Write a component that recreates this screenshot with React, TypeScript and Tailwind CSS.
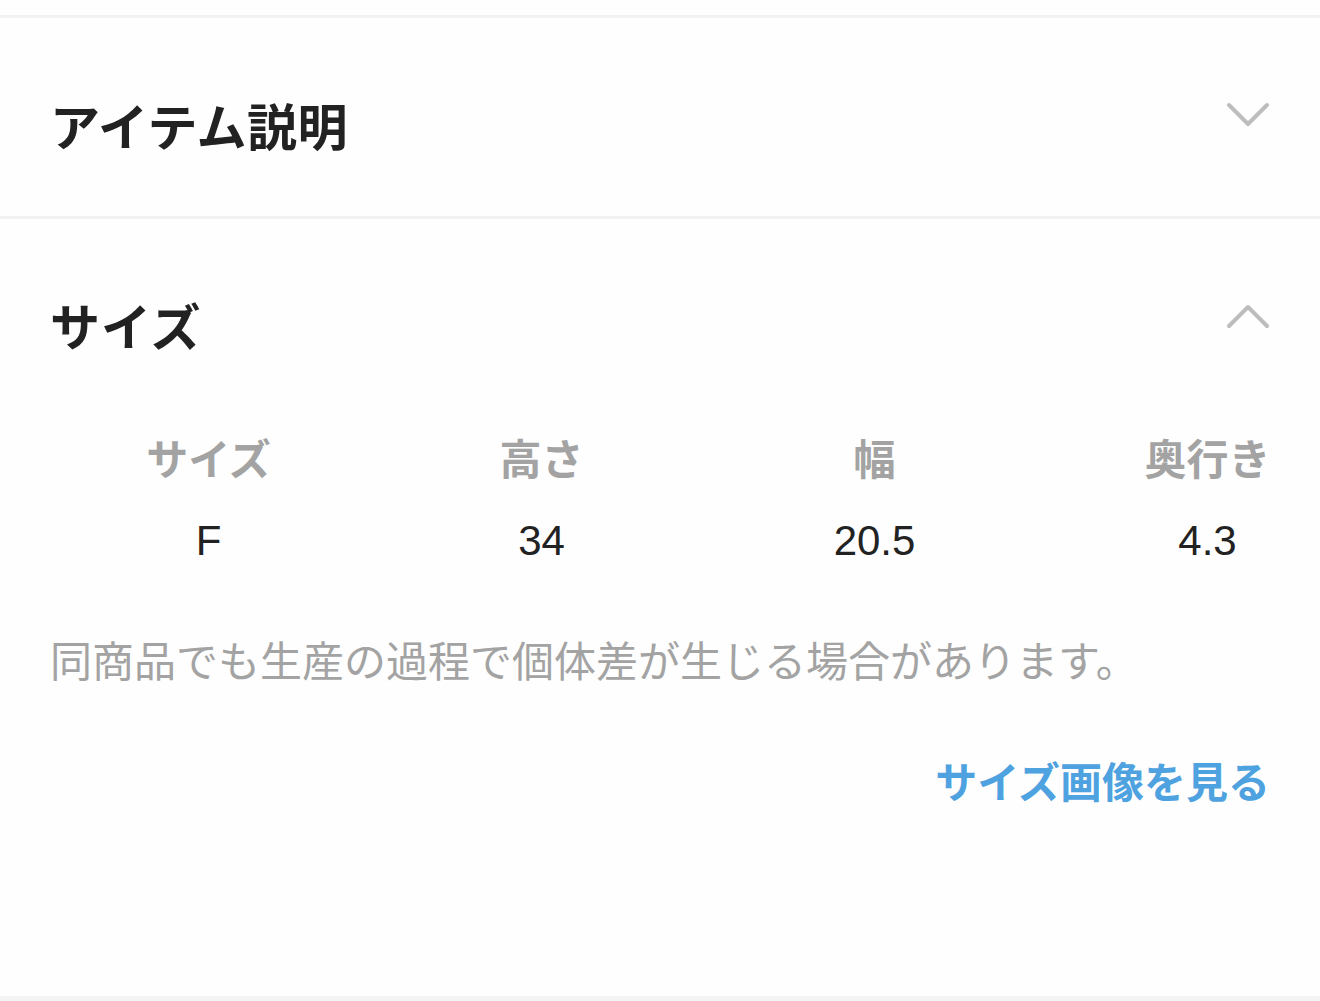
import React from "react";

const font = { fontFamily: '"Noto Sans CJK JP", "Noto Sans", sans-serif' };

function ChevronDown() {
  return (
    <svg width="44" height="28" viewBox="0 0 44 28" fill="none">
      <path d="M3 3 L22 22 L41 3" stroke="#bdbdbd" strokeWidth="4" strokeLinecap="round" strokeLinejoin="round" />
    </svg>
  );
}

function ChevronUp() {
  return (
    <svg width="44" height="28" viewBox="0 0 44 28" fill="none">
      <path d="M3 25 L22 6 L41 25" stroke="#bdbdbd" strokeWidth="4" strokeLinecap="round" strokeLinejoin="round" />
    </svg>
  );
}

export default function App() {
  const headers = ["サイズ", "高さ", "幅", "奥行き"];
  const values = ["F", "34", "20.5", "4.3"];
  return (
    <div className="w-[1320px] h-[1001px] bg-[#fefefe] flex flex-col overflow-hidden" style={font}>
      <div className="h-[15px] shrink-0" />
      <div className="h-[3px] bg-[#f2f2f2] shrink-0" />
      <div className="h-[198px] shrink-0 flex items-start justify-between pl-[50px] pr-[50px]">
        <h2 className="mt-[74px] text-[50px] leading-[64px] font-bold text-[#222222] tracking-[0.5px]">アイテム説明</h2>
        <div className="mt-[84px]">
          <ChevronDown />
        </div>
      </div>
      <div className="h-[3px] bg-[#f2f2f2] shrink-0" />
      <div className="flex-1 flex flex-col">
        <div className="flex items-start justify-between pl-[50px] pr-[50px]">
          <h2 className="mt-[73px] text-[50px] leading-[64px] font-bold text-[#222222] tracking-[1px]">サイズ</h2>
          <div className="mt-[82px]">
            <ChevronUp />
          </div>
        </div>
        <div className="overflow-hidden">
          <div className="mt-[73px] grid grid-cols-[333px_333px_333px_333px] pl-[42px] w-[1374px]">
            {headers.map((h) => (
              <div key={h} className="text-center text-[42px] leading-[56px] font-bold text-[#a3a3a3]">
                {h}
              </div>
            ))}
            {values.map((v) => (
              <div
                key={v}
                className="mt-[28px] text-center text-[42px] leading-[56px] text-[#222222]"
                style={{ fontFamily: '"Liberation Sans", Arial, sans-serif' }}
              >
                {v}
              </div>
            ))}
          </div>
        </div>
        <p className="mt-[62px] pl-[50px] text-[42px] leading-[56px] text-[#a3a3a3]">
          同商品でも生産の過程で個体差が生じる場合があります。
        </p>
        <div className="mt-[65px] pr-[50px] flex justify-end">
          <span className="text-[42px] leading-[56px] font-bold text-[#4fa2e0]">サイズ画像を見る</span>
        </div>
        <div className="flex-1" />
      </div>
      <div className="h-[5px] bg-[#f4f4f4] shrink-0" />
    </div>
  );
}
